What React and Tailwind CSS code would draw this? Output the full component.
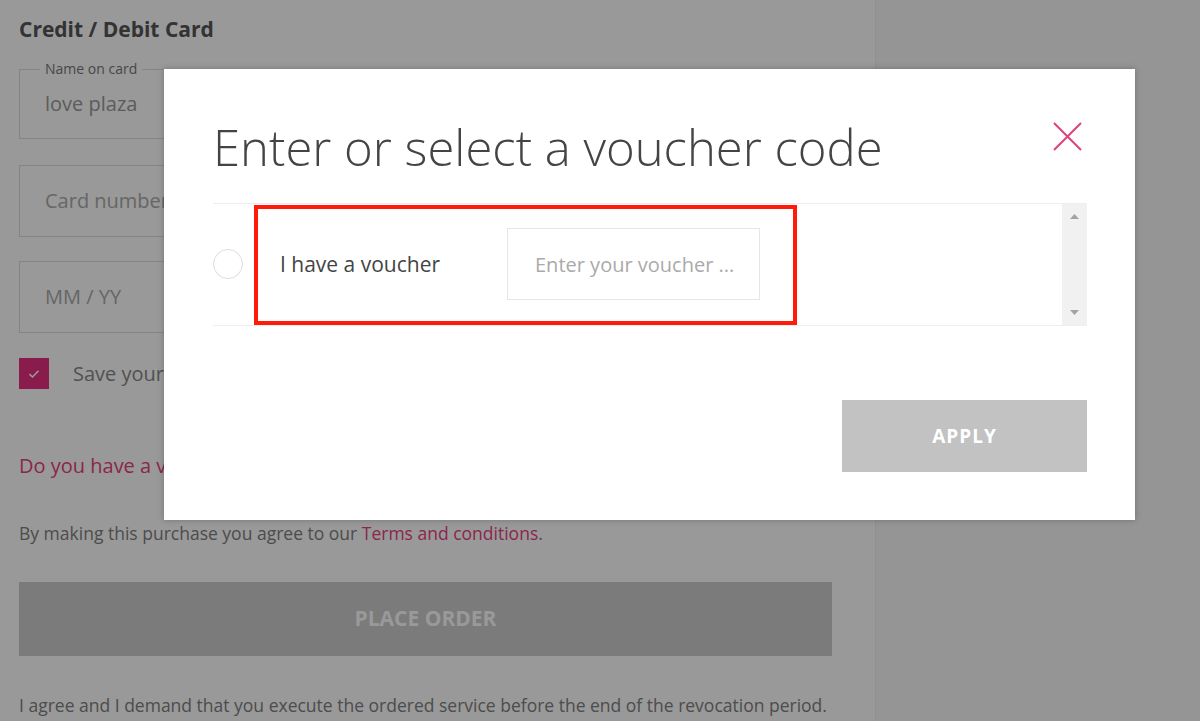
import React from "react";

const font = { fontFamily: '"Open Sans", "Liberation Sans", sans-serif' };

const CheckoutPage = () => (
  <div className="flex h-[721px] w-[1200px] overflow-hidden bg-white">
    <div className="flex w-[875px] shrink-0 flex-col pl-[19px] pt-[16px] [&>*]:shrink-0">
      <div className="text-[21px] font-bold leading-[26px] text-[#555]">Credit / Debit Card</div>

      <div className="relative mt-[27px] flex h-[70px] w-[406px] items-center border border-[#ddd] pl-[25px]">
        <span className="absolute -top-[10px] left-[20px] bg-white px-[5px] text-[14px] leading-[18px] text-[#777]">
          Name on card
        </span>
        <span className="text-[20px] text-[#999]">love plaza</span>
      </div>

      <div className="mt-[26px] flex h-[72px] w-[406px] items-center border border-[#ddd] pl-[25px] text-[20px] text-[#aaa]">
        Card number
      </div>

      <div className="mt-[24px] flex h-[72px] w-[195px] items-center border border-[#ddd] pl-[25px] text-[20px] text-[#aaa]">
        MM / YY
      </div>

      <div className="mt-[25px] flex h-[31px] items-center">
        <div className="flex h-[31px] w-[30px] items-center justify-center bg-[#e5307f]">
          <svg width="12" height="10" viewBox="0 0 12 10" fill="none">
            <path d="M1.5 5.2 4.5 8 10.5 1.8" stroke="white" strokeWidth="1.6" />
          </svg>
        </div>
        <span className="ml-[24px] text-[20px] text-[#888]">Save your card for future payments</span>
      </div>

      <div className="mt-[63px] text-[20px] leading-[28px] text-[#e8407f]">Do you have a voucher?</div>

      <div className="mt-[41px] text-[17.5px] leading-[24px] text-[#808080]">
        By making this purchase you agree to our <span className="text-[#e8407f]">Terms and conditions</span>.
      </div>

      <button className="mt-[37px] h-[74px] w-[813px] bg-[#cdcdcd] text-[21px] font-bold text-white">
        PLACE ORDER
      </button>

      <p className="mt-[37px] w-[815px] text-[17.5px] leading-[24px] text-[#808080]">
        I agree and I demand that you execute the ordered service before the end of the revocation period.
        I am aware that after complete fulfillment of the contract I lose my right of revocation.
      </p>
    </div>
    <div className="flex-1 border-l border-[#eee] bg-[#f8f8f8]" />
  </div>
);

const VoucherModal = () => (
  <div className="absolute left-[164px] top-[69px] flex h-[451px] w-[971px] flex-col bg-white pl-[49px] pr-[48px] pt-[49px] shadow-[0_0_6px_rgba(0,0,0,0.25)]">
    <div className="flex items-start justify-between">
      <h2 className="text-[49px] font-light leading-[1.2] text-[#444]">Enter or select a voucher code</h2>
      <button className="mr-[5px] mt-[4px]" aria-label="close">
        <svg width="29" height="29" viewBox="0 0 29 29">
          <path d="M1 1 28 28M28 1 1 28" stroke="#e0417c" strokeWidth="2" />
        </svg>
      </button>
    </div>

    <div className="mt-[26px] flex h-[123px] border-y border-[#eee]">
      <div className="flex flex-1 items-center">
        <span className="h-[30px] w-[30px] rounded-full border border-[#ddd]" />
        <span className="ml-[37px] w-[227px] text-[21px] text-[#444]">I have a voucher</span>
        <input
          type="text"
          placeholder="Enter your voucher ..."
          className="h-[72px] w-[253px] border border-[#e6e6e6] pl-[27px] text-[20px] outline-none placeholder:text-[#aaa]"
          style={font}
        />
      </div>
      <div className="flex w-[25px] flex-col items-center justify-between bg-[#f1f1f1] py-[10px]">
        <svg width="9" height="5" viewBox="0 0 9 5">
          <path d="M0 5 4.5 0 9 5Z" fill="#a3a3a3" />
        </svg>
        <svg width="9" height="5" viewBox="0 0 9 5">
          <path d="M0 0 4.5 5 9 0Z" fill="#a3a3a3" />
        </svg>
      </div>
    </div>

    <button className="ml-auto mt-[74px] h-[72px] w-[245px] bg-[#c2c2c2] text-[19px] font-bold tracking-[1px] text-white">
      APPLY
    </button>

    <div className="pointer-events-none absolute left-[90px] top-[136px] h-[120px] w-[543px] border-4 border-[#ff1a0a]" />
  </div>
);

export default function App() {
  return (
    <div className="relative h-[721px] w-[1200px] overflow-hidden" style={font}>
      <CheckoutPage />
      <div className="absolute inset-0 bg-black/40" />
      <VoucherModal />
    </div>
  );
}
